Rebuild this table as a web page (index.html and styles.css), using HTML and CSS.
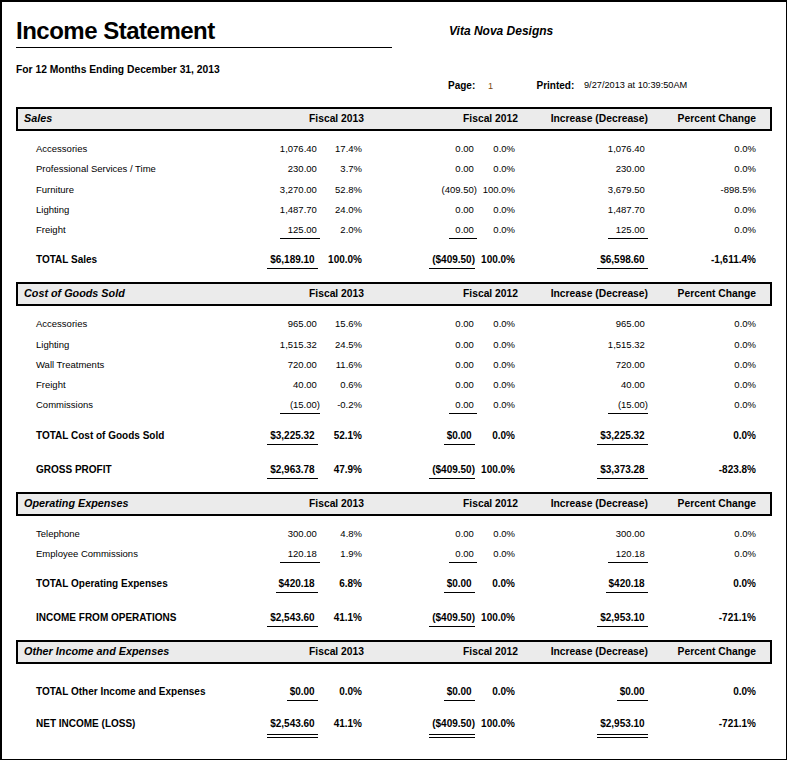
FILE: index.html
```html
<!DOCTYPE html>
<html lang="en">
<head>
<meta charset="utf-8">
<title>Income Statement</title>
<link rel="stylesheet" href="styles.css">
</head>
<body>
<div class="page">
  <header class="head">
    <div class="head-left">
      <h1 class="title">Income Statement</h1>
      <p class="subtitle">For 12 Months Ending December 31, 2013</p>
    </div>
    <div class="head-right">
      <p class="company">Vita Nova Designs</p>
      <div class="meta">
        <span class="meta-label">Page:</span>
        <span class="meta-page">1</span>
        <span class="meta-label meta-printed">Printed:</span>
        <span class="meta-date">9/27/2013 at 10:39:50AM</span>
      </div>
    </div>
  </header>

  <main class="report">
    <section class="section">
      <div class="sec-head"><span class="sec-title">Sales</span><span>Fiscal 2013</span><span>Fiscal 2012</span><span>Increase (Decrease)</span><span>Percent Change</span></div>
      <div class="rows">
        <div class="row"><span class="lbl">Accessories</span><span class="a13"><span class="p">1,076.40</span></span><span>17.4%</span><span class="a12"><span class="p">0.00</span></span><span>0.0%</span><span class="inc"><span class="p">1,076.40</span></span><span>0.0%</span></div>
        <div class="row"><span class="lbl">Professional Services / Time</span><span class="a13"><span class="p">230.00</span></span><span>3.7%</span><span class="a12"><span class="p">0.00</span></span><span>0.0%</span><span class="inc"><span class="p">230.00</span></span><span>0.0%</span></div>
        <div class="row"><span class="lbl">Furniture</span><span class="a13"><span class="p">3,270.00</span></span><span>52.8%</span><span class="a12">(409.50)</span><span>100.0%</span><span class="inc"><span class="p">3,679.50</span></span><span>-898.5%</span></div>
        <div class="row"><span class="lbl">Lighting</span><span class="a13"><span class="p">1,487.70</span></span><span>24.0%</span><span class="a12"><span class="p">0.00</span></span><span>0.0%</span><span class="inc"><span class="p">1,487.70</span></span><span>0.0%</span></div>
        <div class="row"><span class="lbl">Freight</span><span class="a13"><span class="p u w40">125.00</span></span><span>2.0%</span><span class="a12"><span class="p u w28">0.00</span></span><span>0.0%</span><span class="inc"><span class="p u w40">125.00</span></span><span>0.0%</span></div>
        <div class="row total"><span class="lbl">TOTAL Sales</span><span class="a13"><span class="p u">$6,189.10</span></span><span>100.0%</span><span class="a12"><span class="u">($409.50)</span></span><span>100.0%</span><span class="inc"><span class="p u">$6,598.60</span></span><span>-1,611.4%</span></div>
      </div>
    </section>

    <section class="section">
      <div class="sec-head"><span class="sec-title">Cost of Goods Sold</span><span>Fiscal 2013</span><span>Fiscal 2012</span><span>Increase (Decrease)</span><span>Percent Change</span></div>
      <div class="rows">
        <div class="row"><span class="lbl">Accessories</span><span class="a13"><span class="p">965.00</span></span><span>15.6%</span><span class="a12"><span class="p">0.00</span></span><span>0.0%</span><span class="inc"><span class="p">965.00</span></span><span>0.0%</span></div>
        <div class="row"><span class="lbl">Lighting</span><span class="a13"><span class="p">1,515.32</span></span><span>24.5%</span><span class="a12"><span class="p">0.00</span></span><span>0.0%</span><span class="inc"><span class="p">1,515.32</span></span><span>0.0%</span></div>
        <div class="row"><span class="lbl">Wall Treatments</span><span class="a13"><span class="p">720.00</span></span><span>11.6%</span><span class="a12"><span class="p">0.00</span></span><span>0.0%</span><span class="inc"><span class="p">720.00</span></span><span>0.0%</span></div>
        <div class="row"><span class="lbl">Freight</span><span class="a13"><span class="p">40.00</span></span><span>0.6%</span><span class="a12"><span class="p">0.00</span></span><span>0.0%</span><span class="inc"><span class="p">40.00</span></span><span>0.0%</span></div>
        <div class="row"><span class="lbl">Commissions</span><span class="a13"><span class="u w40">(15.00)</span></span><span>-0.2%</span><span class="a12"><span class="p u w28">0.00</span></span><span>0.0%</span><span class="inc"><span class="u w40">(15.00)</span></span><span>0.0%</span></div>
        <div class="row total"><span class="lbl">TOTAL Cost of Goods Sold</span><span class="a13"><span class="p u">$3,225.32</span></span><span>52.1%</span><span class="a12"><span class="p u">$0.00</span></span><span>0.0%</span><span class="inc"><span class="p u">$3,225.32</span></span><span>0.0%</span></div>
        <div class="row total grand"><span class="lbl">GROSS PROFIT</span><span class="a13"><span class="p u">$2,963.78</span></span><span>47.9%</span><span class="a12"><span class="u">($409.50)</span></span><span>100.0%</span><span class="inc"><span class="p u">$3,373.28</span></span><span>-823.8%</span></div>
      </div>
    </section>

    <section class="section">
      <div class="sec-head"><span class="sec-title">Operating Expenses</span><span>Fiscal 2013</span><span>Fiscal 2012</span><span>Increase (Decrease)</span><span>Percent Change</span></div>
      <div class="rows">
        <div class="row"><span class="lbl">Telephone</span><span class="a13"><span class="p">300.00</span></span><span>4.8%</span><span class="a12"><span class="p">0.00</span></span><span>0.0%</span><span class="inc"><span class="p">300.00</span></span><span>0.0%</span></div>
        <div class="row"><span class="lbl">Employee Commissions</span><span class="a13"><span class="p u w40">120.18</span></span><span>1.9%</span><span class="a12"><span class="p u w28">0.00</span></span><span>0.0%</span><span class="inc"><span class="p u w40">120.18</span></span><span>0.0%</span></div>
        <div class="row total"><span class="lbl">TOTAL Operating Expenses</span><span class="a13"><span class="p u">$420.18</span></span><span>6.8%</span><span class="a12"><span class="p u">$0.00</span></span><span>0.0%</span><span class="inc"><span class="p u">$420.18</span></span><span>0.0%</span></div>
        <div class="row total grand"><span class="lbl">INCOME FROM OPERATIONS</span><span class="a13"><span class="p u">$2,543.60</span></span><span>41.1%</span><span class="a12"><span class="u">($409.50)</span></span><span>100.0%</span><span class="inc"><span class="p u">$2,953.10</span></span><span>-721.1%</span></div>
      </div>
    </section>

    <section class="section">
      <div class="sec-head"><span class="sec-title">Other Income and Expenses</span><span>Fiscal 2013</span><span>Fiscal 2012</span><span>Increase (Decrease)</span><span>Percent Change</span></div>
      <div class="rows">
        <div class="row total"><span class="lbl">TOTAL Other Income and Expenses</span><span class="a13"><span class="p u">$0.00</span></span><span>0.0%</span><span class="a12"><span class="p u">$0.00</span></span><span>0.0%</span><span class="inc"><span class="p u">$0.00</span></span><span>0.0%</span></div>
        <div class="row total net"><span class="lbl">NET INCOME (LOSS)</span><span class="a13"><span class="p u uu">$2,543.60</span></span><span>41.1%</span><span class="a12"><span class="u uu">($409.50)</span></span><span>100.0%</span><span class="inc"><span class="p u uu">$2,953.10</span></span><span>-721.1%</span></div>
      </div>
    </section>
  </main>
</div>
</body>
</html>
```

FILE: styles.css
```css
* { box-sizing: border-box; }

body {
  margin: 0;
  background: #fff;
  color: #000;
  font-family: "Liberation Sans", Arial, sans-serif;
}

.page {
  width: 787px;
  height: 760px;
  border-style: solid;
  border-color: #000;
  border-width: 2px 1px 1px 2px;
}

/* ---------- header ---------- */
.head {
  display: flex;
  height: 105px;
}

.head-left {
  width: 376px;
  margin-left: 14px;
}

.title {
  margin: 15px 0 0;
  padding-bottom: 2px;
  border-bottom: 1px solid #000;
  font-size: 24px;
  font-weight: bold;
  line-height: 28px;
  letter-spacing: -0.5px;
}

.subtitle {
  margin: 16px 0 0;
  font-size: 10.3px;
  font-weight: bold;
  line-height: 12px;
}

.head-right {
  margin-left: 56px;
}

.company {
  margin: 22px 0 0 1px;
  font-size: 12px;
  font-style: italic;
  font-weight: bold;
  line-height: 14px;
}

.meta {
  display: flex;
  margin-top: 42px;
  font-size: 10px;
  line-height: 12px;
}

.meta-label {
  width: 40px;
  font-weight: bold;
}

.meta-page {
  width: 48.5px;
  font-size: 9.2px;
  color: #7a4a10;
}

.meta-printed {
  width: 47.5px;
}

.meta-date {
  font-size: 9.2px;
  margin-top: -1px;
}

/* ---------- report ---------- */
.report {
  margin: 0 14px;
}

.section + .section {
  margin-top: 12px;
}

.sec-head {
  display: grid;
  grid-template-columns: 246px 100px 154px 130px 108px 14px;
  height: 24px;
  border: 2px solid #000;
  background: #ebebeb;
  font-size: 10.3px;
  font-weight: bold;
  line-height: 19px;
  white-space: nowrap;
}

.sec-head span {
  text-align: right;
}

.sec-head .sec-title {
  text-align: left;
  padding-left: 6px;
  font-size: 10.8px;
  font-style: italic;
}

.rows {
  padding-top: 8px;
}

.row {
  display: grid;
  grid-template-columns: 244px 60px 42px 115px 38px 133px 108px 16px;
  height: 20.25px;
  font-size: 9.5px;
  line-height: 20px;
  white-space: nowrap;
}

.row > span {
  text-align: right;
}

.row > .lbl {
  text-align: left;
  padding-left: 20px;
}

.row.total {
  height: 20px;
  margin-top: 10px;
  font-size: 10px;
  font-weight: bold;
}

.row.grand {
  margin-top: 14px;
}

.row.net {
  margin-top: 12px;
}

.total .a13,
.total .a12 {
  padding-right: 2px;
}

/* positive amounts leave room for the closing parenthesis */
.p {
  padding-right: 0.333em;
}

.u {
  display: inline-block;
  line-height: 14px;
  padding-bottom: 1px;
  border-bottom: 1px solid #000;
  text-align: right;
}

.total .u {
  padding-left: 3px;
}

.w40 { min-width: 40px; }
.w28 { min-width: 28px; }

.u.uu {
  padding-bottom: 3px;
  border-bottom: 4px double #000;
}
```
